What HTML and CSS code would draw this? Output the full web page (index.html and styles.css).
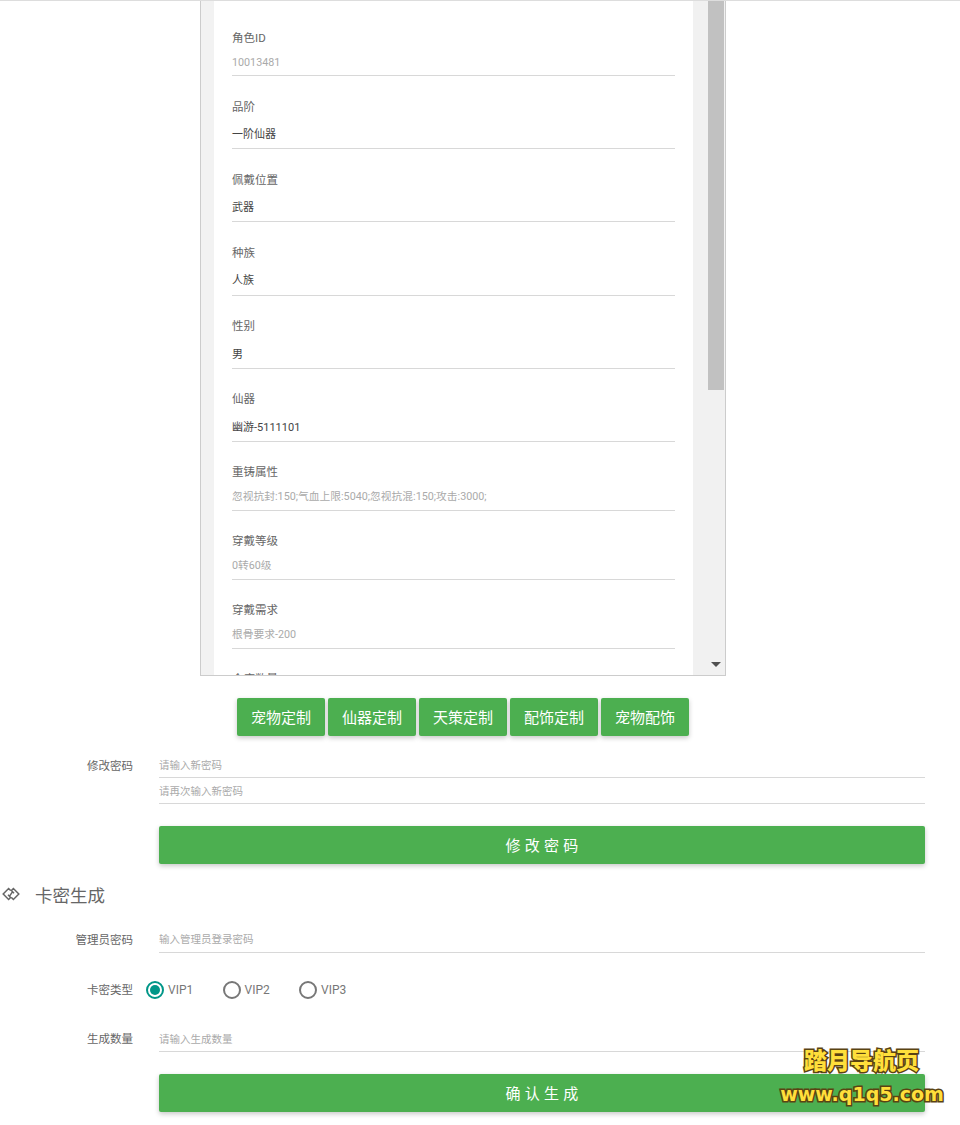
FILE: index.html
```html
<!DOCTYPE html>
<html lang="zh">
<head>
<meta charset="utf-8">
<title>后台</title>
<link rel="stylesheet" href="styles.css">
</head>
<body>
<div class="topline"></div>
<div class="panel">
  <div class="gutter"></div>
  <div class="content">
    <div class="field ro"><div class="label">角色ID</div><div class="value muted">10013481</div></div>
    <div class="field sel"><div class="label">品阶</div><div class="value">一阶仙器</div></div>
    <div class="field sel"><div class="label">佩戴位置</div><div class="value">武器</div></div>
    <div class="field sel"><div class="label">种族</div><div class="value">人族</div></div>
    <div class="field sel"><div class="label">性别</div><div class="value">男</div></div>
    <div class="field sel"><div class="label">仙器</div><div class="value">幽游-5111101</div></div>
    <div class="field ro"><div class="label">重铸属性</div><div class="value muted">忽视抗封:150;气血上限:5040;忽视抗混:150;攻击:3000;</div></div>
    <div class="field ro"><div class="label">穿戴等级</div><div class="value muted">0转60级</div></div>
    <div class="field ro"><div class="label">穿戴需求</div><div class="value muted">根骨要求-200</div></div>
    <div class="label">仓库数量</div>
  </div>
  <div class="track"></div>
  <div class="scrollbar"><div class="thumb"></div><div class="arrow"></div></div>
</div>
<div class="btnrow">
  <button class="btn">宠物定制</button>
  <button class="btn">仙器定制</button>
  <button class="btn">天策定制</button>
  <button class="btn">配饰定制</button>
  <button class="btn">宠物配饰</button>
</div>
<section class="pw">
  <div class="frow"><div class="flabel">修改密码</div><div class="input">请输入新密码</div></div>
  <div class="frow"><div class="flabel"></div><div class="input">请再次输入新密码</div></div>
  <div class="frow submit"><div class="flabel"></div><button class="wide">修改密码</button></div>
</section>
<h2 class="title">
  <svg class="ticon" viewBox="0 0 18 14" width="18" height="14" aria-hidden="true"><path d="M8.6 3.6 6.6 1.5 1.2 7l5.4 5.5 2-2.1L6 7.8M9.4 10.4l2 2.1L16.8 7l-5.4-5.5-2 2.1L12 6.2M7.2 9.6 10.8 4.4" fill="none" stroke="#666" stroke-width="1.5"/></svg>
  <span>卡密生成</span>
</h2>
<section class="gen">
  <div class="frow admin"><div class="flabel">管理员密码</div><div class="input">输入管理员登录密码</div></div>
  <div class="frow types">
    <div class="flabel">卡密类型</div>
    <div class="radios">
      <label class="radio on"><i class="dot"></i>VIP1</label>
      <label class="radio"><i class="dot"></i>VIP2</label>
      <label class="radio"><i class="dot"></i>VIP3</label>
    </div>
  </div>
  <div class="frow qty"><div class="flabel">生成数量</div><div class="input">请输入生成数量</div></div>
  <div class="frow submit2"><div class="flabel"></div><button class="wide">确认生成</button></div>
</section>
<div class="mark">
  <div class="mark-cn">踏月导航页</div>
  <div class="mark-en">www.q1q5.com</div>
</div>
</body>
</html>
```
FILE: styles.css
```css
* { box-sizing: border-box; }
html, body { margin: 0; padding: 0; }
body {
  position: relative;
  height: 1125px;
  overflow: hidden;
  background: #fff;
  color: #555;
  font-family: Roboto, "Noto Sans CJK SC", sans-serif;
  font-size: 11.5px;
}
.topline { height: 1px; background: #ddd; }
.panel {
  display: flex;
  width: 526px;
  height: 675px;
  margin-left: 200px;
  border: 1px solid #ccc;
  border-top: 0;
  overflow: hidden;
}
.gutter { width: 13px; background: #f2f2f2; flex: none; }
.content { width: 479px; flex: none; padding: 26px 18px 0 18px; overflow: hidden; }
.track { width: 15px; flex: none; background: #f1f1f1; }
.scrollbar { position: relative; width: 17px; flex: none; background: #f1f1f1; }
.thumb { width: 16px; height: 389px; background: #c1c1c1; }
.arrow {
  position: absolute;
  left: 3px;
  bottom: 8px;
  border: 5px solid transparent;
  border-top: 5px solid #505050;
  border-bottom: 0;
}
.field { border-bottom: 1px solid #d8d8d8; margin-bottom: 20px; }
.label, .value { line-height: 20px; }
.label { padding-top: .5px; color: #666; }
.value { color: #444; font-size: 11px; }
.value.muted { color: #aaa; font-size: 10.75px; }
.ro { height: 49px; }
.ro .value { margin-top: 5px; }
.sel { height: 53.2px; }
.sel .value { margin-top: 8.5px; }
.btnrow { display: flex; justify-content: center; gap: 3px; width: 526px; margin: 22px 0 0 200px; }
.btn, .wide {
  border: 0;
  border-radius: 2px;
  background: #4caf50;
  color: #fff;
  font-family: inherit;
  box-shadow: 0 2px 5px rgba(0, 0, 0, .22);
}
.btn { width: 88px; height: 38px; padding: 0 0 2px; font-size: 15px; }
.pw { margin-top: 16px; }
.frow { display: flex; align-items: flex-end; height: 26px; padding-right: 35px; }
.flabel { width: 133px; flex: none; margin-right: 26px; padding-top: 2px; text-align: right; color: #666; line-height: 24px; align-self: flex-start; }
.input { flex: 1; height: 26px; padding-top: 2px; line-height: 23px; border-bottom: 1px solid #d8d8d8; color: #aaa; font-size: 10.5px; }
.wide { flex: 1; height: 38px; padding: 0 0 2px 4px; font-size: 15px; letter-spacing: 4.2px; }
.submit { height: 38px; margin-top: 22px; }
.title {
  display: flex;
  align-items: center;
  height: 24px;
  margin: 18px 0 0 2px;
  font-size: 17.5px;
  font-weight: 400;
  color: #666;
}
.ticon { margin-right: 15px; flex: none; }
.gen { margin-top: 20px; }
.admin { height: 27px; }
.admin .input { height: 27px; padding-top: 1px; line-height: 26px; }
.admin .flabel { padding-top: 1px; line-height: 26px; }
.types { height: 30px; margin-top: 22px; align-items: center; }
.types .flabel { padding-top: 0; line-height: 30px; margin-right: 13px; }
.radios { display: flex; }
.radio { display: flex; align-items: center; width: 76.5px; color: #777; font-size: 12px; }
.dot {
  position: relative;
  width: 18px;
  height: 18px;
  margin-right: 4px;
  border: 2px solid #777;
  border-radius: 50%;
}
.on .dot { border-color: #009688; }
.on .dot::after {
  content: "";
  position: absolute;
  inset: 2px;
  border-radius: 50%;
  background: #009688;
}
.qty { height: 26px; margin-top: 21px; }
.qty .input { height: 26px; padding-top: 1px; line-height: 25px; }
.qty .flabel { padding-top: 1px; line-height: 25px; }
.submit2 { height: 38px; margin-top: 22px; }
.mark {
  position: absolute;
  left: 751px;
  top: 1041px;
  width: 204px;
  text-align: center;
  color: #ffdf3b;
  font-weight: 900;
  font-family: "Noto Sans CJK SC", sans-serif;
  -webkit-text-stroke: 3px #5a4312;
  paint-order: stroke fill;
}
.mark-cn { font-size: 23px; line-height: 36px; padding-left: 17px; }
.mark-en { margin-top: 3px; font-family: "DejaVu Sans", sans-serif; font-weight: 700; font-size: 19px; line-height: 28px; padding-left: 18px; white-space: nowrap; }
```
